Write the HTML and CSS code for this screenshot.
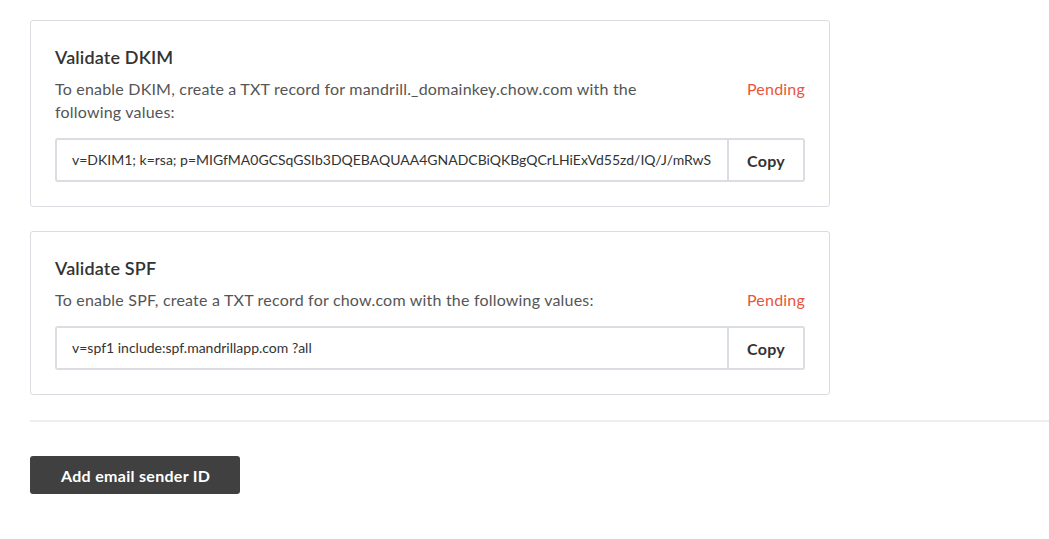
FILE: index.html
```html
<!DOCTYPE html>
<html>
<head>
<meta charset="utf-8">
<link rel="stylesheet" href="styles.css">
</head>
<body>
<div class="page">
  <div class="card">
    <h2 class="card-title">Validate DKIM</h2>
    <div class="card-desc">
      <p class="desc-text">To enable DKIM, create a TXT record for mandrill._domainkey.chow.com with the following values:</p>
      <span class="status">Pending</span>
    </div>
    <div class="copy-field">
      <div class="copy-value">v=DKIM1; k=rsa; p=MIGfMA0GCSqGSIb3DQEBAQUAA4GNADCBiQKBgQCrLHiExVd55zd/IQ/J/mRwS</div>
      <button class="copy-btn">Copy</button>
    </div>
  </div>
  <div class="card">
    <h2 class="card-title">Validate SPF</h2>
    <div class="card-desc">
      <p class="desc-text">To enable SPF, create a TXT record for chow.com with the following values:</p>
      <span class="status">Pending</span>
    </div>
    <div class="copy-field">
      <div class="copy-value">v=spf1 include:spf.mandrillapp.com ?all</div>
      <button class="copy-btn">Copy</button>
    </div>
  </div>
  <hr class="divider">
  <button class="primary-btn">Add email sender ID</button>
</div>
</body>
</html>
```
FILE: styles.css
```css
* { box-sizing: border-box; }
html, body { margin: 0; padding: 0; background: #fff; }
body { font-family: Lato, "Open Sans", sans-serif; color: #333; }
.page { padding: 20px 0 0 30px; }
.card {
  width: 800px;
  border: 1px solid #d9dce0;
  border-radius: 3px;
  padding: 24px;
  margin-bottom: 24px;
}
.card + .card { margin-bottom: 25px; }
.card-title {
  margin: 0;
  font-size: 18px;
  line-height: 24px;
  font-weight: 600;
  letter-spacing: 0.15px;
  color: #333;
}
.card-desc {
  display: flex;
  justify-content: space-between;
  align-items: flex-start;
  margin-top: 8px;
}
.desc-text {
  margin: 0;
  width: 620px;
  font-size: 16px;
  line-height: 23px;
  letter-spacing: 0.2px;
  color: #555;
}
.status {
  font-size: 16px;
  line-height: 23px;
  letter-spacing: 0.2px;
  color: #e8553d;
}
.copy-field {
  display: flex;
  margin-top: 15px;
  height: 44px;
  border: 2px solid #dadde1;
  border-radius: 3px;
}
.copy-value {
  flex: 1;
  padding-left: 15px;
  font-size: 14px;
  line-height: 40px;
  color: #333;
  white-space: nowrap;
  overflow: hidden;
}
.copy-btn {
  width: 76px;
  border: 0;
  border-left: 2px solid #dadde1;
  background: #fff;
  font-family: Lato, sans-serif;
  font-weight: 700;
  font-size: 16px;
  letter-spacing: 0.3px;
  color: #333;
  padding: 0;
}
.divider {
  margin: 0;
  border: 0;
  border-top: 2px solid #eeeeee;
}
.primary-btn {
  margin-top: 34px;
  height: 38px;
  padding: 0 30px 0 31px;
  background: #404040;
  color: #fff;
  border: 0;
  border-radius: 3px;
  font-family: Lato, sans-serif;
  font-weight: 700;
  font-size: 16px;
  letter-spacing: 0.3px;
}
```
